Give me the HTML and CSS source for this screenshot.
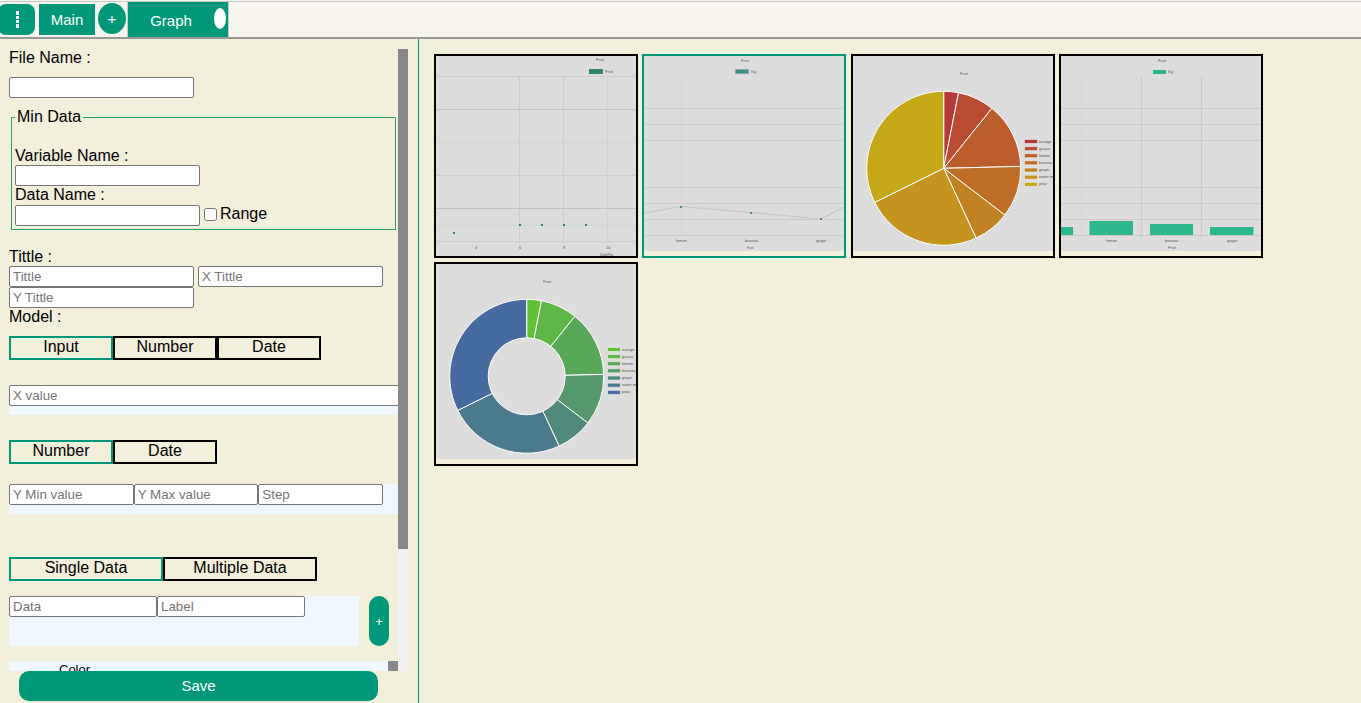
FILE: index.html
```html
<!DOCTYPE html>
<html lang="en">
<head>
<meta charset="utf-8">
<title>Graph</title>
<link rel="stylesheet" href="styles.css">
</head>
<body>
<header class="topbar">
  <button class="menu" aria-label="Menu"><svg width="3" height="17" viewBox="0 0 3 17"><path d="M0 0h3v4H0zM0 5h3v3H0zM0 9h3v3H0zM0 13h3v4H0z" fill="#fff"/></svg></button>
  <button class="main-btn">Main</button>
  <button class="add-tab" aria-label="Add tab">+</button>
  <div class="tab"><button class="tab-name">Graph</button><button class="tab-close" aria-label="Close tab"></button></div>
</header>
<div class="page">
  <aside class="sidebar">
    <div class="scroll">
      <form class="form">
        <label class="label" for="file">File Name :</label>
        <input class="field file" id="file" type="text">
        <fieldset class="group">
          <legend>Min Data</legend>
          <label class="label" for="variable">Variable Name :</label>
          <input class="field" id="variable" type="text">
          <label class="label" for="data-name">Data Name :</label>
          <div class="range-row">
            <input class="field" id="data-name" type="text">
            <label class="range"><input class="check" type="checkbox">Range</label>
          </div>
        </fieldset>
        <label class="label" for="title">Tittle :</label>
        <div class="titles">
          <input class="field" id="title" type="text" placeholder="Tittle">
          <input class="field" type="text" placeholder="X Tittle" aria-label="X Tittle">
          <input class="field" type="text" placeholder="Y Tittle" aria-label="Y Tittle">
        </div>
        <div class="label">Model :</div>
        <div class="tabs model">
          <button type="button" class="choice on">Input</button><button type="button" class="choice">Number</button><button type="button" class="choice">Date</button>
        </div>
        <div class="band">
          <input class="field long" type="text" placeholder="X value" aria-label="X value">
        </div>
        <div class="tabs axis">
          <button type="button" class="choice on">Number</button><button type="button" class="choice">Date</button>
        </div>
        <div class="band limits">
          <input class="field" type="text" placeholder="Y Min value" aria-label="Y Min value">
          <input class="field" type="text" placeholder="Y Max value" aria-label="Y Max value">
          <input class="field" type="text" placeholder="Step" aria-label="Step">
        </div>
        <div class="tabs kind">
          <button type="button" class="choice wide on">Single Data</button><button type="button" class="choice wide">Multiple Data</button>
        </div>
        <div class="data-row">
          <div class="data-box">
            <input class="field" type="text" placeholder="Data" aria-label="Data">
            <input class="field" type="text" placeholder="Label" aria-label="Label">
          </div>
          <button type="button" class="add-data" aria-label="Add data">+</button>
        </div>
        <div class="colors"><span class="colors-name">Color</span><span class="colors-bar"></span></div>
      </form>
      <div class="track"><div class="thumb"></div></div>
    </div>
    <button class="save">Save</button>
  </aside>
  <main class="gallery">
    <button class="card" aria-label="Scatter chart">
      <svg class="chart" viewBox="0 0 200 200">
        <rect width="200" height="200" fill="#ddd"/>
        <path d="M0 20.500h200M0 53.500h200M0 119.500h200M0 152.500h200M0 185.500h200M83.500 21v167M127.500 21v167" stroke="#cecece"/>
        <path d="M0 53.500h200M0 152.500h200" stroke="#c3c3c3"/>
        <path d="M0 86.500h200M0 169.500h200M171.500 21v167" stroke="#d4d4d4"/>
        <path d="M153 13h14v5h-14z" fill="#2f8565"/>
        <path d="M17 176h2v2h-2zM83 168h2v2h-2zM105 168h2v2h-2zM127 168h2v2h-2zM149 168h2v2h-2z" fill="#2f8565"/>
        <g class="tiny"><text x="160" y="5">Fruit</text><text x="169" y="17">Fruit</text><text x="39" y="193">4</text><text x="83" y="193">6</text><text x="127" y="193">8</text><text x="170" y="193">10</text><text x="164" y="200">Unit/Kg</text></g>
      </svg>
    </button>
    <button class="card chosen" aria-label="Line chart">
      <svg class="chart" viewBox="0 0 200 200">
        <rect width="200" height="195" fill="#ddd"/>
        <path d="M0 52.500h200M0 68.500h200M0 84.500h200M0 131.500h200M0 147.500h200M0 163.500h200M0 179.500h200" stroke="#cbcbcb"/>
        <path d="M37.500 21v161" stroke="#d4d4d4"/>
        <path d="M0 157l37-6.500 70 6 70 6.500 23-12" fill="none" stroke="#c4c4c4"/>
        <path d="M91.500 13.500h13v4h-13z" fill="#438c87" stroke="#83aaa7"/>
        <path d="M36 150h2v2h-2zM106 156h2v2h-2zM176 162h2v2h-2z" fill="#438c87"/>
        <g class="tiny"><text x="97" y="6">Fruit</text><text x="107" y="17">Kg</text><text x="32" y="186">lemon</text><text x="101" y="186">banana</text><text x="172" y="186">grape</text><text x="103" y="193">fruit</text></g>
      </svg>
    </button>
    <button class="card" aria-label="Pie chart">
      <svg class="chart" viewBox="0 0 200 200">
        <rect width="200" height="195" fill="#ddd"/>
        <g stroke="#fff" stroke-width="1">
          <path d="M90.700 112.300V35.300A77 77 0 0 1 105.500 36.700z" fill="#b63939"/>
          <path d="M90.700 112.300L105.500 36.700A77 77 0 0 1 138.900 52.300z" fill="#bc4b34"/>
          <path d="M90.700 112.300L138.900 52.300A77 77 0 0 1 167.700 110.400z" fill="#bb5d2d"/>
          <path d="M90.700 112.300L167.700 110.400A77 77 0 0 1 151.900 159.100z" fill="#bf6e28"/>
          <path d="M90.700 112.300L151.900 159.100A77 77 0 0 1 123.100 182.100z" fill="#c08223"/>
          <path d="M90.700 112.300L123.100 182.100A77 77 0 0 1 21.700 146.400z" fill="#c4941e"/>
          <path d="M90.700 112.300L21.700 146.400A77 77 0 0 1 90.700 35.300z" fill="#c5a818"/>
        </g>
        <g stroke="#eee" stroke-width=".6"><path d="M171.500 83.500h13v4h-13z" fill="#b63939"/><path d="M171.500 90.600h13v4h-13z" fill="#bc4b34"/><path d="M171.500 97.700h13v4h-13z" fill="#bb5d2d"/><path d="M171.500 104.800h13v4h-13z" fill="#bf6e28"/><path d="M171.500 112h13v4h-13z" fill="#c08223"/><path d="M171.500 119.200h13v4h-13z" fill="#c4941e"/><path d="M171.500 126.400h13v4h-13z" fill="#c5a818"/></g>
        <g class="tiny"><text x="107" y="19">Fruit</text><text x="186" y="87">orange</text><text x="186" y="94">guava</text><text x="186" y="101">lemon</text><text x="186" y="108">banana</text><text x="186" y="115">grape</text><text x="186" y="122">water m</text><text x="186" y="129">pear</text></g>
      </svg>
    </button>
    <button class="card" aria-label="Bar chart">
      <svg class="chart" viewBox="0 0 200 200">
        <rect width="200" height="195" fill="#ddd"/>
        <path d="M0 52.500h200M0 68.500h200M0 84.500h200M0 131.500h200M0 147.500h200M0 163.500h200M0 179.500h200M80.500 21v161M140.500 21v161" stroke="#cbcbcb"/>
        <path d="M20.500 21v161" stroke="#d8d8d8"/>
        <path d="M0 171h12v8H0zM28.500 165h43.500v14H28.500zM89 168h43v11H89zM149 171h43.500v8H149zM92 14h13v4H92z" fill="#2bb68c"/>
        <g class="tiny"><text x="97" y="6">Fruit</text><text x="107" y="17">Kg</text><text x="45" y="186">lemon</text><text x="104" y="186">banana</text><text x="166" y="186">grape</text><text x="107" y="193">Fruit</text></g>
      </svg>
    </button>
    <button class="card" aria-label="Doughnut chart">
      <svg class="chart" viewBox="0 0 200 200">
        <rect width="200" height="195" fill="#ddd"/>
        <g stroke="#fff" stroke-width="1">
          <path d="M90.700 112.300V35.300A77 77 0 0 1 105.500 36.700z" fill="#62c236"/>
          <path d="M90.700 112.300L105.500 36.700A77 77 0 0 1 138.900 52.300z" fill="#5eb548"/>
          <path d="M90.700 112.300L138.900 52.300A77 77 0 0 1 167.700 110.400z" fill="#59a759"/>
          <path d="M90.700 112.300L167.700 110.400A77 77 0 0 1 151.900 159.100z" fill="#55986b"/>
          <path d="M90.700 112.300L151.900 159.100A77 77 0 0 1 123.100 182.100z" fill="#50897c"/>
          <path d="M90.700 112.300L123.100 182.100A77 77 0 0 1 21.700 146.400z" fill="#4b7a8d"/>
          <path d="M90.700 112.300L21.700 146.400A77 77 0 0 1 90.700 35.300z" fill="#466b9f"/>
          <circle cx="90.700" cy="112.300" r="38.500" fill="#ddd"/>
        </g>
        <g stroke="#eee" stroke-width=".6"><path d="M171.500 83.500h13v4h-13z" fill="#62c236"/><path d="M171.500 90.600h13v4h-13z" fill="#5eb548"/><path d="M171.500 97.700h13v4h-13z" fill="#59a759"/><path d="M171.500 104.800h13v4h-13z" fill="#55986b"/><path d="M171.500 112h13v4h-13z" fill="#50897c"/><path d="M171.500 119.200h13v4h-13z" fill="#4b7a8d"/><path d="M171.500 126.400h13v4h-13z" fill="#466b9f"/></g>
        <g class="tiny"><text x="107" y="19">Fruit</text><text x="186" y="87">orange</text><text x="186" y="94">guava</text><text x="186" y="101">lemon</text><text x="186" y="108">banana</text><text x="186" y="115">grape</text><text x="186" y="122">water m</text><text x="186" y="129">pear</text></g>
      </svg>
    </button>
  </main>
</div>
</body>
</html>
```
FILE: styles.css
```css
* { box-sizing: border-box; }

body {
  margin: 0;
  height: 100vh;
  display: flex;
  flex-direction: column;
  overflow: hidden;
  background: #f2efdb;
  color: #000;
  font: 16px/18px "Liberation Sans", Arial, sans-serif;
}

button {
  margin: 0;
  padding: 0;
  border: 0;
  font-family: inherit;
  color: inherit;
  background: none;
}

.topbar {
  flex: none;
  display: flex;
  align-items: flex-start;
  padding-top: 1px;
  background: linear-gradient(#c8c8c8, #c8c8c8) 0 1px / 100% 1px no-repeat #f8f5ee;
  border-bottom: 2px solid #999;
}

.menu, .main-btn, .add-tab, .tab, .add-data, .save {
  background: #009879;
  color: #fff;
  font-size: 15px;
}

.menu {
  width: 37px;
  height: 31px;
  margin: 3px 4px 0 -2px;
  padding-left: 1px;
  display: flex;
  align-items: center;
  justify-content: center;
  border-radius: 8px;
}

.main-btn { width: 56px; height: 31px; margin: 3px 3px 0 0; }
.add-tab { width: 28px; height: 31px; margin: 2px 1px 0 0; border-radius: 50%; }

.tab {
  display: flex;
  width: 102px;
  height: 36px;
  border: 1px solid #c8c8c8;
  border-bottom: 0;
}

.tab-name { flex: 1; padding-top: 2px; font-size: 15px; }
.tab-close { width: 12px; height: 21px; margin: 6px 2px 0 0; border-radius: 50%; background: #fff; }

.page { flex: 1; display: flex; min-height: 0; }

.sidebar {
  flex: none;
  width: 419px;
  display: flex;
  flex-direction: column;
  padding: 10px 10px 2px 9px;
  border-right: 1px solid #009879;
}

.scroll { flex: 1; min-height: 0; display: flex; overflow: hidden; }
.form { flex: 1; min-width: 0; overflow: hidden; }
.track { flex: none; width: 10px; background: #f1f1f1; }
.thumb { height: 500px; background: #888; }

.label { display: block; }

.field {
  display: block;
  width: 185px;
  height: 21px;
  margin: 0;
  padding: 1px 3px;
  border: 1px solid #767676;
  border-radius: 2px;
  background: #fff;
  font-family: inherit;
}

.field::placeholder { color: #757575; }
.file { margin-top: 10px; }

.group {
  margin: 10px 2px 18px;
  padding: 21px 3px 3px;
  border: 1px solid #2d9d69;
}

.group legend { padding: 0 2px; }
.range-row { display: flex; gap: 4px; margin-top: 1px; }
.range { display: flex; align-items: center; gap: 3px; height: 18px; }
.check { width: 13px; height: 13px; margin: 0; }
.titles { display: flex; flex-wrap: wrap; column-gap: 4px; }

.tabs { display: flex; }
.model { margin: 10px 0 25px; }
.axis { margin: 25px 0 20px; }
.kind { margin: 43px 0 15px; }

.choice {
  width: 104px;
  height: 24px;
  padding-bottom: 2px;
  border: 2px solid #000;
  font-size: 16px;
  line-height: 18px;
}

.wide { width: 154px; }
.on { border-color: #009879; }

.band { height: 30px; background: #f0f8ff; }
.long { width: 105%; }
.limits { display: flex; padding-right: 15px; }
.limits .field { flex: 1; min-width: 0; }

.data-row { display: flex; gap: 10px; margin-bottom: 15px; }
.data-box { display: flex; width: 350px; height: 50px; background: #f0f8ff; }
.data-box .field { width: 148px; }
.add-data { width: 20px; height: 50px; border-radius: 10px; font-size: 13px; }

.colors {
  display: flex;
  justify-content: space-between;
  height: 60px;
  padding-left: 50px;
  background: #f0f8ff;
  font-size: 13px;
}

.colors-bar { width: 10px; background: #888; }

.save { flex: none; height: 30px; margin: 0 30px 0 10px; padding-bottom: 2px; border-radius: 10px; }

.gallery { flex: 1; min-width: 0; padding: 15px; }

.card {
  width: 204px;
  height: 204px;
  margin-bottom: 4px;
  border: 2px solid #000;
  vertical-align: top;
  overflow: hidden;
}

.chosen { border-color: #009879; }
.chart { display: block; width: 100%; }
.tiny { font-size: 4px; fill: #555; }
```
